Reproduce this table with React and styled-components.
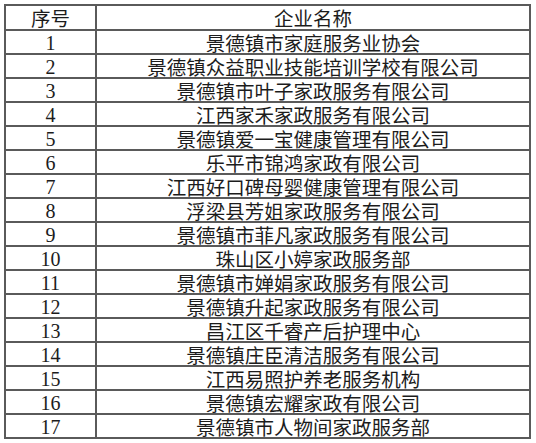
import React from "react";
import styled, { createGlobalStyle } from "styled-components";

const Global = createGlobalStyle`
  html, body { margin: 0; padding: 0; background: #fff; }
  body { width: 536px; height: 443px; overflow: hidden; }
`;

const Page = styled.div`
  padding: 4px 0 0 4px;
`;

const Table = styled.div`
  width: 527px;
  height: 435px;
  display: grid;
  grid-template-columns: 91px 1fr;
  grid-template-rows: 25px repeat(17, 1fr);
  border-left: 2px solid #5a5a5a;
  border-top: 2px solid #5a5a5a;
  box-sizing: border-box;
`;

const Cell = styled.div`
  border-right: 2px solid #5a5a5a;
  border-bottom: 2px solid #5a5a5a;
  display: flex;
  align-items: center;
  justify-content: center;
  color: #1c1c1c;
  font-family: ${(p) =>
    p.$num
      ? '"Liberation Serif", "Noto Sans CJK SC", serif'
      : '"Noto Sans CJK SC", sans-serif'};
  font-size: ${(p) => (p.$num ? "20px" : "19.5px")};
  line-height: 1;
  white-space: nowrap;
  padding-top: 1px;
`;

const rows = [
  "景德镇市家庭服务业协会",
  "景德镇众益职业技能培训学校有限公司",
  "景德镇市叶子家政服务有限公司",
  "江西家禾家政服务有限公司",
  "景德镇爱一宝健康管理有限公司",
  "乐平市锦鸿家政有限公司",
  "江西好口碑母婴健康管理有限公司",
  "浮梁县芳姐家政服务有限公司",
  "景德镇市菲凡家政服务有限公司",
  "珠山区小婷家政服务部",
  "景德镇市婵娟家政服务有限公司",
  "景德镇升起家政服务有限公司",
  "昌江区千睿产后护理中心",
  "景德镇庄臣清洁服务有限公司",
  "江西易照护养老服务机构",
  "景德镇宏耀家政有限公司",
  "景德镇市人物间家政服务部",
];

export default function App() {
  return (
    <Page>
      <Global />
      <Table>
        <Cell>序号</Cell>
        <Cell>企业名称</Cell>
        {rows.map((name, i) => (
          <React.Fragment key={i}>
            <Cell $num>{i + 1}</Cell>
            <Cell>{name}</Cell>
          </React.Fragment>
        ))}
      </Table>
    </Page>
  );
}
